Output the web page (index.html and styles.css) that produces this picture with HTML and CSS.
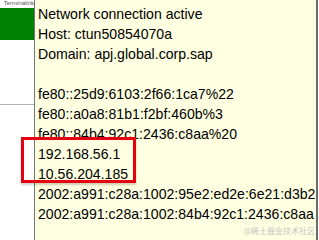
FILE: index.html
```html
<!DOCTYPE html>
<html lang="en">
<head>
  <meta charset="UTF-8" />
  <title>Network tooltip</title>
  <link rel="stylesheet" href="styles.css">
</head>
<body>
  <div class="screen">
    <div class="side">
      <div class="side-title"><span>Terminalink</span></div>
      <div class="side-bar"></div>
      <div class="side-gap"></div>
      <div class="side-rule"></div>
    </div>

    <div class="tip">
      <div class="line">Network connection active</div>
      <div class="line">Host: ctun50854070a</div>
      <div class="line">Domain: apj.global.corp.sap</div>
      <div class="line">&nbsp;</div>
      <div class="line">fe80::25d9:6103:2f66:1ca7%22</div>
      <div class="line">fe80::a0a8:81b1:f2bf:460b%3</div>
      <div class="line">fe80::84b4:92c1:2436:c8aa%20</div>
      <div class="line">192.168.56.1</div>
      <div class="line">10.56.204.185</div>
      <div class="line">2002:a991:c28a:1002:95e2:ed2e:6e21:d3b2</div>
      <div class="line">2002:a991:c28a:1002:84b4:92c1:2436:c8aa</div>
    </div>

    <div class="mark"></div>
    <div class="watermark">@稀土掘金技术社区</div>
  </div>
</body>
</html>
```

FILE: styles.css
```css
body { margin: 0; background: #fff; }
.screen { position: relative; width: 319px; height: 240px; overflow: hidden; display: flex; }

.side { width: 34px; flex: none; display: flex; flex-direction: column; }
.side-title { height: 7px; overflow: hidden; display: flex; align-items: flex-end; justify-content: flex-end; }
.side-title span { font-family: "Liberation Sans", Arial, sans-serif; font-size: 6px; line-height: 7px; color: #555; white-space: nowrap; }
.side-bar { height: 32px; margin-top: 1px; background: #008000; }
.side-gap { height: 64px; }
.side-rule { height: 1px; background: #b4b4b4; }

.tip { width: 280px; height: 260px; margin-right: 1px; padding: 4px 0 0 3px; background: #ffffe1; border-left: 1px solid #767676; border-right: 2px solid #6a6a6a; font-family: "Liberation Sans", Arial, sans-serif; font-size: 14.1px; line-height: 20px; color: #000; white-space: nowrap; }

.mark { position: absolute; left: 21px; top: 137px; width: 109px; height: 40px; border: 3px solid #e60012; box-shadow: 0 2px 2px rgba(0, 0, 0, 0.2); }

.watermark { position: absolute; right: 4px; bottom: 4px; font-family: "Noto Sans CJK SC", sans-serif; font-size: 8px; line-height: 10px; color: #c4c4c4; }
```
